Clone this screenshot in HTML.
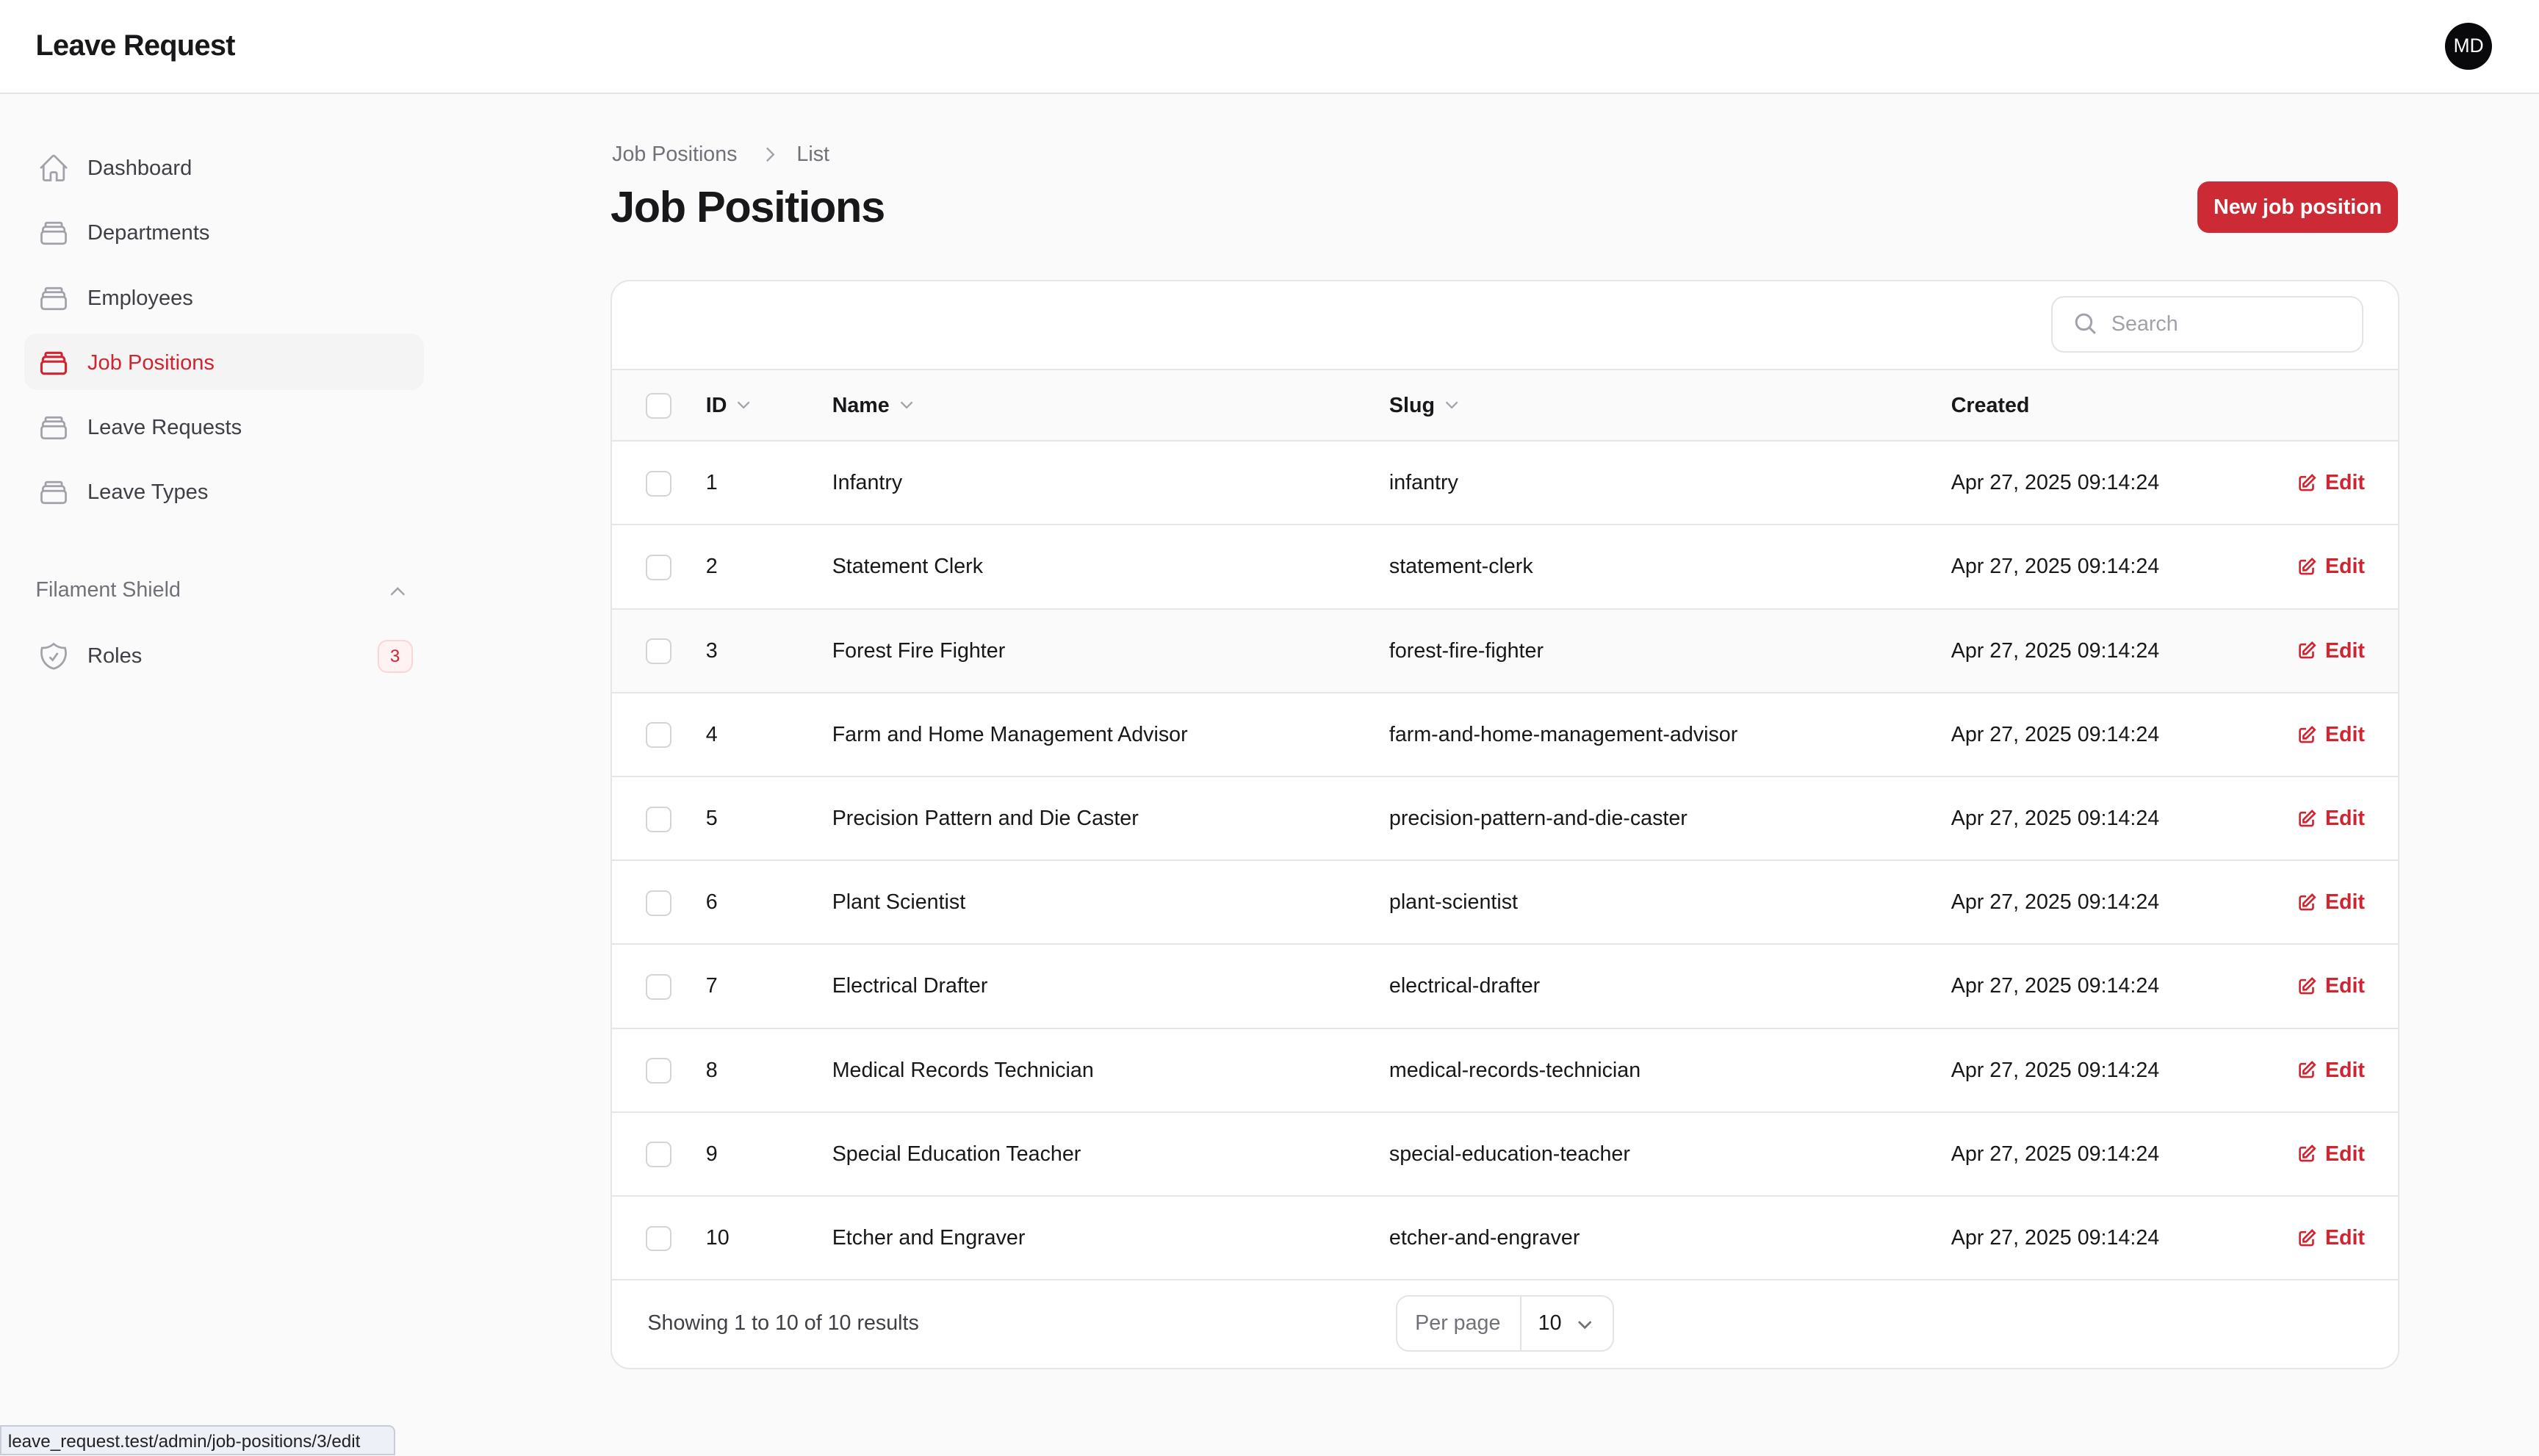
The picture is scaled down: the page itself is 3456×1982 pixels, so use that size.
<!DOCTYPE html>
<html><head><meta charset="utf-8"><style>
html,body{margin:0;padding:0;background:#fafafa;width:3456px;height:1982px;overflow:hidden}
#w{zoom:2.2041;width:1568px;height:899px;position:relative;font-family:"Liberation Sans",Arial,sans-serif;color:#18181b;font-size:13px}
.a{position:absolute;white-space:nowrap}
.hdr{left:0;top:0;width:1568px;height:57px;background:#fff;border-bottom:1px solid #e4e4e7}
.nav{left:22px;height:20px;line-height:20px;font-size:13.2px;color:#3f3f46}
.nav span{position:absolute;left:32px}
.nav svg{position:absolute;left:1px;top:0}
.card{left:377px;top:173px;width:1103px;height:671px;background:#fff;border:1px solid #e6e6e9;border-radius:12px;overflow:hidden}
.row{left:0;width:1103px;height:51px;border-top:1px solid #e6e6e9;font-size:13px}
.row div{position:absolute;top:0;line-height:51px}
.cb{position:absolute;left:21px;width:14px;height:14px;border:1px solid #d4d4d8;border-radius:4px;background:#fff}
.edit{color:#d02430;font-weight:bold}
.chv{vertical-align:-1px;margin-left:5px}
</style></head><body><div id="w">
<div class="a hdr"></div>
<div class="a" style="left:22px;top:18px;font-size:18px;font-weight:bold;letter-spacing:-0.3px">Leave Request</div>
<div class="a" style="left:1510px;top:14px;width:29px;height:29px;border-radius:50%;background:#09090b;color:#fff;font-size:12px;line-height:29px;text-align:center">MD</div>

<div class="a" style="left:15px;top:206px;width:247px;height:35px;background:#f4f4f5;border-radius:8px"></div>
<div class="a nav" style="top:94px"><svg width="20" height="20" viewBox="0 0 24 24" fill="none" stroke="#a1a1aa" stroke-width="1.5"><path d="M2.25 12l8.95-8.95a1.1 1.1 0 011.6 0L21.75 12M4.5 9.75v10.1c0 .6.5 1.1 1.1 1.1H9.75v-4.9c0-.6.5-1.1 1.1-1.1h2.3c.6 0 1.1.5 1.1 1.1v4.9h4.150c.6 0 1.1-.5 1.1-1.1V9.75"/></svg><span>Dashboard</span></div>
<div class="a nav" style="top:134px"><svg width="20" height="20" viewBox="0 0 24 24" fill="none" stroke="#a1a1aa" stroke-width="1.5"><path d="M6 6.9V5.5c0-.6.5-1 1-1h10c.6 0 1 .4 1 1v1.4M4 11V9.5c0-1 .8-2 2-2h12c1.1 0 2 1 2 2V11M3 13c0-1.1.9-2 2-2h14c1.1 0 2 .9 2 2v5c0 1.1-.9 2-2 2H5c-1.1 0-2-.9-2-2z"/></svg><span>Departments</span></div>
<div class="a nav" style="top:174px"><svg width="20" height="20" viewBox="0 0 24 24" fill="none" stroke="#a1a1aa" stroke-width="1.5"><path d="M6 6.9V5.5c0-.6.5-1 1-1h10c.6 0 1 .4 1 1v1.4M4 11V9.5c0-1 .8-2 2-2h12c1.1 0 2 1 2 2V11M3 13c0-1.1.9-2 2-2h14c1.1 0 2 .9 2 2v5c0 1.1-.9 2-2 2H5c-1.1 0-2-.9-2-2z"/></svg><span>Employees</span></div>
<div class="a nav" style="top:214px;color:#d02430"><svg width="20" height="20" viewBox="0 0 24 24" fill="none" stroke="#d02430" stroke-width="1.7"><path d="M6 6.9V5.5c0-.6.5-1 1-1h10c.6 0 1 .4 1 1v1.4M4 11V9.5c0-1 .8-2 2-2h12c1.1 0 2 1 2 2V11M3 13c0-1.1.9-2 2-2h14c1.1 0 2 .9 2 2v5c0 1.1-.9 2-2 2H5c-1.1 0-2-.9-2-2z"/></svg><span>Job Positions</span></div>
<div class="a nav" style="top:254px"><svg width="20" height="20" viewBox="0 0 24 24" fill="none" stroke="#a1a1aa" stroke-width="1.5"><path d="M6 6.9V5.5c0-.6.5-1 1-1h10c.6 0 1 .4 1 1v1.4M4 11V9.5c0-1 .8-2 2-2h12c1.1 0 2 1 2 2V11M3 13c0-1.1.9-2 2-2h14c1.1 0 2 .9 2 2v5c0 1.1-.9 2-2 2H5c-1.1 0-2-.9-2-2z"/></svg><span>Leave Requests</span></div>
<div class="a nav" style="top:294px"><svg width="20" height="20" viewBox="0 0 24 24" fill="none" stroke="#a1a1aa" stroke-width="1.5"><path d="M6 6.9V5.5c0-.6.5-1 1-1h10c.6 0 1 .4 1 1v1.4M4 11V9.5c0-1 .8-2 2-2h12c1.1 0 2 1 2 2V11M3 13c0-1.1.9-2 2-2h14c1.1 0 2 .9 2 2v5c0 1.1-.9 2-2 2H5c-1.1 0-2-.9-2-2z"/></svg><span>Leave Types</span></div>
<div class="a" style="left:22px;top:357px;font-size:13px;color:#71717a">Filament Shield</div>
<svg class="a" style="left:239px;top:359px" width="13" height="13" viewBox="0 0 24 24" fill="none" stroke="#a1a1aa" stroke-width="2"><path d="M4.5 15.75l7.5-7.5 7.5 7.5"/></svg>
<div class="a nav" style="top:395px"><svg width="20" height="20" viewBox="0 0 24 24" fill="none" stroke="#a1a1aa" stroke-width="1.5"><path d="M9 12.75L11.25 15 15 9.75M12 3a12 12 0 01-8.6 3A12 12 0 003 9.75c0 5.6 3.8 10.3 9 11.6 5.2-1.3 9-6 9-11.6 0-1.300-.2-2.6-.6-3.75A12 12 0 0112 3z"/></svg><span>Roles</span></div>
<div class="a" style="left:233px;top:395px;width:20px;height:19px;border:1px solid #fbd5d8;background:#fef2f2;border-radius:6px;color:#d02430;font-size:11px;line-height:19px;text-align:center">3</div>

<div class="a" style="left:378px;top:88px;font-size:13px;color:#71717a">Job Positions</div>
<svg class="a" style="left:469px;top:89px" width="13" height="13" viewBox="0 0 24 24" fill="none" stroke="#a1a1aa" stroke-width="2"><path d="M8.25 4.5l7.5 7.5-7.5 7.5"/></svg>
<div class="a" style="left:492px;top:88px;font-size:13px;color:#71717a">List</div>
<div class="a" style="left:377px;top:112px;font-size:27px;font-weight:bold;letter-spacing:-0.6px">Job Positions</div>
<div class="a" style="left:1357px;top:112px;width:124px;height:32px;background:#cc2a34;border-radius:7px;color:#fff;font-size:13px;font-weight:bold;line-height:32px;text-align:center">New job position</div>

<div class="a card">
 <div class="a" style="left:889px;top:9px;width:191px;height:33px;border:1px solid #e4e4e7;border-radius:8px"></div>
 <svg class="a" style="left:902px;top:18px" width="16" height="16" viewBox="0 0 24 24" fill="none" stroke="#a1a1aa" stroke-width="2"><circle cx="10.5" cy="10.5" r="7"/><path d="M15.5 15.5L21 21"/></svg>
 <div class="a" style="left:926px;top:19px;font-size:13px;color:#a1a1aa">Search</div>
 <div class="a row" style="top:54px;height:44px;background:#fafafa;font-weight:bold">
  <span class="cb" style="top:14px"></span>
  <div style="left:58px;line-height:44px">ID<svg class="chv" width="11" height="11" viewBox="0 0 24 24" fill="none" stroke="#a1a1aa" stroke-width="2.2"><path d="M19.5 8.25l-7.5 7.5-7.5-7.5"/></svg></div>
  <div style="left:136px;line-height:44px">Name<svg class="chv" width="11" height="11" viewBox="0 0 24 24" fill="none" stroke="#a1a1aa" stroke-width="2.2"><path d="M19.5 8.25l-7.5 7.5-7.5-7.5"/></svg></div>
  <div style="left:480px;line-height:44px">Slug<svg class="chv" width="11" height="11" viewBox="0 0 24 24" fill="none" stroke="#a1a1aa" stroke-width="2.2"><path d="M19.5 8.25l-7.5 7.5-7.5-7.5"/></svg></div>
  <div style="left:827px;line-height:44px">Created</div>
 </div>
 <div id="rows"></div>
 <div class="a" style="left:0;top:616px;width:1103px;border-top:1px solid #e6e6e9"></div>
 <div class="a" style="left:22px;top:636px;font-size:13px;color:#3f3f46">Showing 1 to 10 of 10 results</div>
 <div class="a" style="left:484px;top:626px;width:133px;height:33px;border:1px solid #e4e4e7;border-radius:8px"></div>
 <div class="a" style="left:561px;top:627px;height:33px;border-left:1px solid #e4e4e7"></div>
 <div class="a" style="left:496px;top:636px;font-size:13px;color:#71717a">Per page</div>
 <div class="a" style="left:572px;top:636px;font-size:13px">10</div>
 <svg class="a" style="left:595px;top:638px" width="12" height="12" viewBox="0 0 24 24" fill="none" stroke="#71717a" stroke-width="2.5"><path d="M19.5 8.25l-7.5 7.5-7.5-7.5"/></svg>
</div>
<div class="a" style="left:0;top:880px;width:244px;height:19px;background:#eef0f7;border:1px solid #c8cbd8;border-radius:0 4px 0 0;font-size:11px;line-height:19px;color:#222;padding-left:4px;box-sizing:border-box">leave_request.test/admin/job-positions/3/edit</div>
<script>
var d=[["Infantry","infantry"],["Statement Clerk","statement-clerk"],["Forest Fire Fighter","forest-fire-fighter"],["Farm and Home Management Advisor","farm-and-home-management-advisor"],["Precision Pattern and Die Caster","precision-pattern-and-die-caster"],["Plant Scientist","plant-scientist"],["Electrical Drafter","electrical-drafter"],["Medical Records Technician","medical-records-technician"],["Special Education Teacher","special-education-teacher"],["Etcher and Engraver","etcher-and-engraver"]];
var h="";d.forEach(function(r,i){var t=98+i*51.8;h+='<div class="a row" style="top:'+t+'px'+(i==2?';background:#fafafa':'')+'"><span class="cb" style="top:18px"></span><div style="left:58px">'+(i+1)+'</div><div style="left:136px">'+r[0]+'</div><div style="left:480px">'+r[1]+'</div><div style="left:827px">Apr 27, 2025 09:14:24</div><div class="edit" style="left:1041px"><svg width="13" height="13" viewBox="0 0 24 24" fill="none" stroke="#d02430" stroke-width="2.2" style="vertical-align:-2px;margin-right:4px"><path d="M16.9 4.1l3 3L10 17H7v-3z"/><path d="M18 14v5a2 2 0 01-2 2H5a2 2 0 01-2-2V8a2 2 0 012-2h5"/></svg>Edit</div></div>';});
document.getElementById("rows").innerHTML=h;
</script>
</div></body></html>
